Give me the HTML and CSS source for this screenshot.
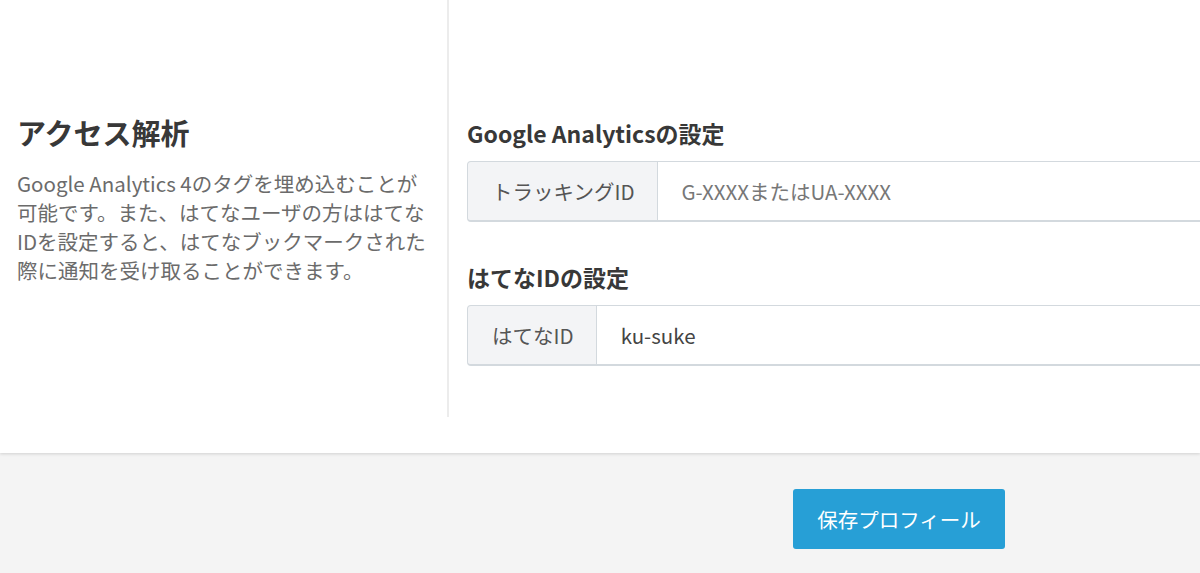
FILE: index.html
```html
<!DOCTYPE html>
<html>
<head>
    <title>アクセス解析の設定</title>
    <link rel="stylesheet" href="styles.css">
</head>
<body>
    <div class="panel">
        <div class="secao">
            <div class="descricao">
                <h2>アクセス解析</h2>
                <p>Google Analytics 4のタグを埋め込むことが可能です。また、はてなユーザの方ははてなIDを設定すると、はてなブックマークされた際に通知を受け取ることができます。</p>
            </div>

            <div class="campos">
                <h3>Google Analyticsの設定</h3>
                <div class="grupo">
                    <span class="rotulo">トラッキングID</span>
                    <input type="text" placeholder="G-XXXXまたはUA-XXXX">
                </div>

                <h3>はてなIDの設定</h3>
                <div class="grupo">
                    <span class="rotulo">はてなID</span>
                    <input type="text" value="ku-suke">
                </div>
            </div>
        </div>
    </div>

    <div class="rodape">
        <button class="salvar">保存プロフィール</button>
    </div>
</body>
</html>
```

FILE: styles.css
```css
body {
    margin: 0;
    background: #f4f4f4;
    font-family: "Noto Sans CJK JP", "Noto Sans", sans-serif;
    color: #333;
}

.panel {
    background: #fff;
    height: 453px;
    box-shadow: 0 1px 3px rgba(0, 0, 0, 0.15);
    overflow: hidden;
}

.secao {
    display: grid;
    grid-template-columns: 449px 1fr;
    height: 417px;
}

.descricao {
    padding: 112px 17px 0 17px;
    border-right: 2px solid #ececec;
}

.descricao h2 {
    margin: 0;
    font-size: 29px;
    font-weight: bold;
    line-height: 40px;
    color: #383838;
}

.descricao p {
    margin: 17px 0 0 0;
    font-size: 20.5px;
    line-height: 29px;
    color: #6b6b6b;
}

.campos {
    padding: 116px 0 0 18px;
}

.campos h3 {
    margin: 0;
    font-size: 23px;
    font-weight: bold;
    line-height: 34px;
    color: #383838;
}

.grupo {
    display: flex;
    margin-top: 11px;
    margin-bottom: 38px;
    height: 61px;
    width: 900px;
}

.rotulo {
    display: flex;
    align-items: center;
    padding: 0 22px 0 24px;
    background: #f3f4f6;
    border: 1px solid #d3d9de;
    border-bottom-width: 2px;
    border-radius: 4px 0 0 4px;
    font-size: 20.5px;
    color: #555;
}

.grupo input {
    flex: 1;
    margin: 0;
    padding: 0 24px;
    border: 1px solid #d3d9de;
    border-bottom-width: 2px;
    border-left: none;
    font-family: inherit;
    font-size: 20.5px;
    color: #444;
    outline: none;
}

.grupo input::placeholder {
    color: #777;
}

.rodape {
    padding: 36px 0 0 793px;
}

.salvar {
    width: 212px;
    height: 60px;
    border: none;
    border-radius: 3px;
    background: #279fd6;
    color: #fff;
    font-family: inherit;
    font-size: 20.5px;
}
```
